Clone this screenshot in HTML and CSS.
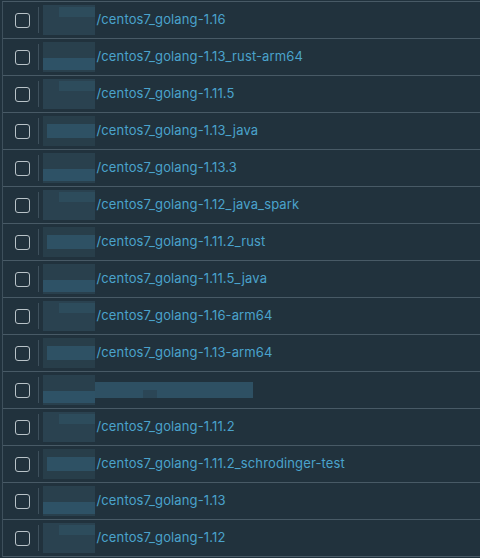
FILE: index.html
```html
<!DOCTYPE html>
<html>
<head>
<meta charset="utf-8">
<link rel="stylesheet" href="styles.css">
</head>
<body>
<div class="grid">
  <div class="row"><span class="cb"></span><span class="div"></span><span class="blur b1"></span><span class="name">/centos7_golang-1.16</span></div>
  <div class="row"><span class="cb"></span><span class="div"></span><span class="blur b2"></span><span class="name">/centos7_golang-1.13_rust-arm64</span></div>
  <div class="row"><span class="cb"></span><span class="div"></span><span class="blur b1"></span><span class="name">/centos7_golang-1.11.5</span></div>
  <div class="row"><span class="cb"></span><span class="div"></span><span class="blur b3"></span><span class="name">/centos7_golang-1.13_java</span></div>
  <div class="row"><span class="cb"></span><span class="div"></span><span class="blur b2"></span><span class="name">/centos7_golang-1.13.3</span></div>
  <div class="row"><span class="cb"></span><span class="div"></span><span class="blur b1"></span><span class="name">/centos7_golang-1.12_java_spark</span></div>
  <div class="row"><span class="cb"></span><span class="div"></span><span class="blur b3"></span><span class="name">/centos7_golang-1.11.2_rust</span></div>
  <div class="row"><span class="cb"></span><span class="div"></span><span class="blur b2"></span><span class="name">/centos7_golang-1.11.5_java</span></div>
  <div class="row"><span class="cb"></span><span class="div"></span><span class="blur b1"></span><span class="name">/centos7_golang-1.16-arm64</span></div>
  <div class="row"><span class="cb"></span><span class="div"></span><span class="blur b3"></span><span class="name">/centos7_golang-1.13-arm64</span></div>
  <div class="row"><span class="cb"></span><span class="div"></span><span class="blur b2"></span><span class="blur wide"></span></div>
  <div class="row"><span class="cb"></span><span class="div"></span><span class="blur b1"></span><span class="name">/centos7_golang-1.11.2</span></div>
  <div class="row"><span class="cb"></span><span class="div"></span><span class="blur b3"></span><span class="name">/centos7_golang-1.11.2_schrodinger-test</span></div>
  <div class="row"><span class="cb"></span><span class="div"></span><span class="blur b2"></span><span class="name">/centos7_golang-1.13</span></div>
  <div class="row"><span class="cb"></span><span class="div"></span><span class="blur b1"></span><span class="name">/centos7_golang-1.12</span></div>
</div>
</body>
</html>
```
FILE: styles.css
```css
html, body {
  margin: 0;
  padding: 0;
  background: #21323d;
  width: 480px;
  height: 558px;
  overflow: hidden;
}
.grid {
  margin-top: 1px;
  margin-left: 2px;
  border-top: 1px solid #485a66;
  border-left: 1px solid #3e505c;
}
.row {
  height: 36px;
  border-bottom: 1px solid #485a66;
  display: flex;
  align-items: center;
  font-family: "Inter", "Lato", sans-serif;
  font-size: 13px;
  letter-spacing: 0.13px;
  color: #4aa3cc;
}
.name {
  margin-top: -2px;
  margin-left: 2px;
  white-space: nowrap;
}
.cb {
  width: 13px;
  height: 13px;
  border: 1.5px solid #b9c3c8;
  border-radius: 3px;
  margin-left: 11.5px;
  flex: none;
}
.div {
  width: 1px;
  height: 26px;
  background: #3e505c;
  margin-left: 8px;
  flex: none;
}
.blur {
  width: 52px;
  height: 30px;
  margin-left: 4px;
  flex: none;
  background:
    linear-gradient(#2d4c5c, #2d4c5c) 16px 2px / 36px 10px no-repeat,
    linear-gradient(#2a4250, #2a4250) 0 0 / 52px 30px no-repeat;
}
.b2 {
  background:
    linear-gradient(#2e5266, #2e5266) 0 16px / 52px 12px no-repeat,
    linear-gradient(#29404d, #29404d) 0 0 / 52px 30px no-repeat;
}
.b3 {
  background:
    linear-gradient(#2e5164, #2e5164) 4px 8px / 48px 14px no-repeat,
    linear-gradient(#283e4a, #283e4a) 0 0 / 52px 30px no-repeat;
}
.wide {
  width: 158px;
  height: 16px;
  margin-left: 0;
  background:
    linear-gradient(#2b4656, #2b4656) 48px 8px / 14px 8px no-repeat,
    linear-gradient(#2e5063, #2e5063) 0 0 / 158px 16px no-repeat;
}
```
